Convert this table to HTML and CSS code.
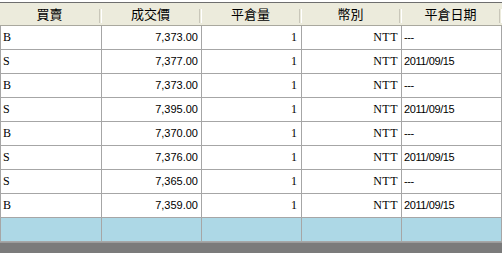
FILE: index.html
```html
<!DOCTYPE html>
<html>
<head>
<meta charset="utf-8">
<link rel="stylesheet" href="styles.css">
</head>
<body>
<div class="grid">
  <div class="head">
    <div class="hcell"><span class="hlabel">買賣</span><span class="sep"></span></div>
    <div class="hcell"><span class="hlabel">成交價</span><span class="sep"></span></div>
    <div class="hcell"><span class="hlabel">平倉量</span><span class="sep"></span></div>
    <div class="hcell"><span class="hlabel">幣別</span><span class="sep"></span></div>
    <div class="hcell"><span class="hlabel">平倉日期</span><span class="sep"></span></div>
  </div>
  <div class="row"><div class="c side">B</div><div class="c num">7,373.00</div><div class="c qty">1</div><div class="c cur">NTT</div><div class="c date">---</div></div>
  <div class="row"><div class="c side">S</div><div class="c num">7,377.00</div><div class="c qty">1</div><div class="c cur">NTT</div><div class="c date">2011/09/15</div></div>
  <div class="row"><div class="c side">B</div><div class="c num">7,373.00</div><div class="c qty">1</div><div class="c cur">NTT</div><div class="c date">---</div></div>
  <div class="row"><div class="c side">S</div><div class="c num">7,395.00</div><div class="c qty">1</div><div class="c cur">NTT</div><div class="c date">2011/09/15</div></div>
  <div class="row"><div class="c side">B</div><div class="c num">7,370.00</div><div class="c qty">1</div><div class="c cur">NTT</div><div class="c date">---</div></div>
  <div class="row"><div class="c side">S</div><div class="c num">7,376.00</div><div class="c qty">1</div><div class="c cur">NTT</div><div class="c date">2011/09/15</div></div>
  <div class="row"><div class="c side">S</div><div class="c num">7,365.00</div><div class="c qty">1</div><div class="c cur">NTT</div><div class="c date">---</div></div>
  <div class="row"><div class="c side">B</div><div class="c num">7,359.00</div><div class="c qty">1</div><div class="c cur">NTT</div><div class="c date">2011/09/15</div></div>
  <div class="row blank"><div class="c"></div><div class="c"></div><div class="c"></div><div class="c"></div><div class="c"></div></div>
  <div class="footer"></div>
</div>
</body>
</html>
```
FILE: styles.css
```css
html, body {
  margin: 0;
  padding: 0;
  background: #ffffff;
}
body {
  width: 502px;
  height: 253px;
  overflow: hidden;
}
.grid {
  padding-top: 2px;
  display: flex;
  flex-direction: column;
}
.head {
  display: grid;
  grid-template-columns: 102px 100px 100px 100px 100px;
  height: 24px;
  box-sizing: border-box;
  border-top: 1px solid #6e6e6e;
  border-bottom: 1px solid #a9a89e;
  background: #ecebdc;
}
.hcell {
  display: flex;
  align-items: stretch;
}
.hlabel {
  flex: 1;
  text-align: center;
  font-family: "Noto Sans CJK TC", sans-serif;
  font-size: 13px;
  line-height: 22px;
  color: #000;
}
.sep {
  width: 1px;
  margin: 6px 0 2px;
  border-left: 1px solid #c9c7ba;
  border-right: 1px solid #ffffff;
}
.row {
  display: grid;
  grid-template-columns: 102px 100px 100px 100px 100px;
  height: 24px;
}
.c {
  box-sizing: border-box;
  border-right: 1px solid #a6a6a6;
  border-bottom: 1px solid #a6a6a6;
  line-height: 23px;
  white-space: nowrap;
  overflow: hidden;
  color: #000;
}
.c:first-child {
  border-left: 1px solid #a6a6a6;
}
.side {
  font-family: "Liberation Serif", serif;
  font-size: 12px;
  padding-left: 2px;
}
.num {
  font-family: "Liberation Sans", sans-serif;
  font-size: 11px;
  text-align: right;
  padding-right: 3px;
}
.qty {
  font-family: "Liberation Serif", serif;
  font-size: 12px;
  text-align: right;
  padding-right: 4px;
}
.cur {
  font-family: "Liberation Serif", serif;
  font-size: 12px;
  text-align: right;
  padding-right: 3px;
  letter-spacing: 0.5px;
}
.date {
  font-family: "Liberation Sans", sans-serif;
  font-size: 11px;
  letter-spacing: -0.4px;
  padding-left: 2px;
}
.blank .c {
  background: #add8e6;
}
.footer {
  height: 12px;
  border-top: 1px solid #9c9c9c;
  background: #7b7b7b;
}
```
